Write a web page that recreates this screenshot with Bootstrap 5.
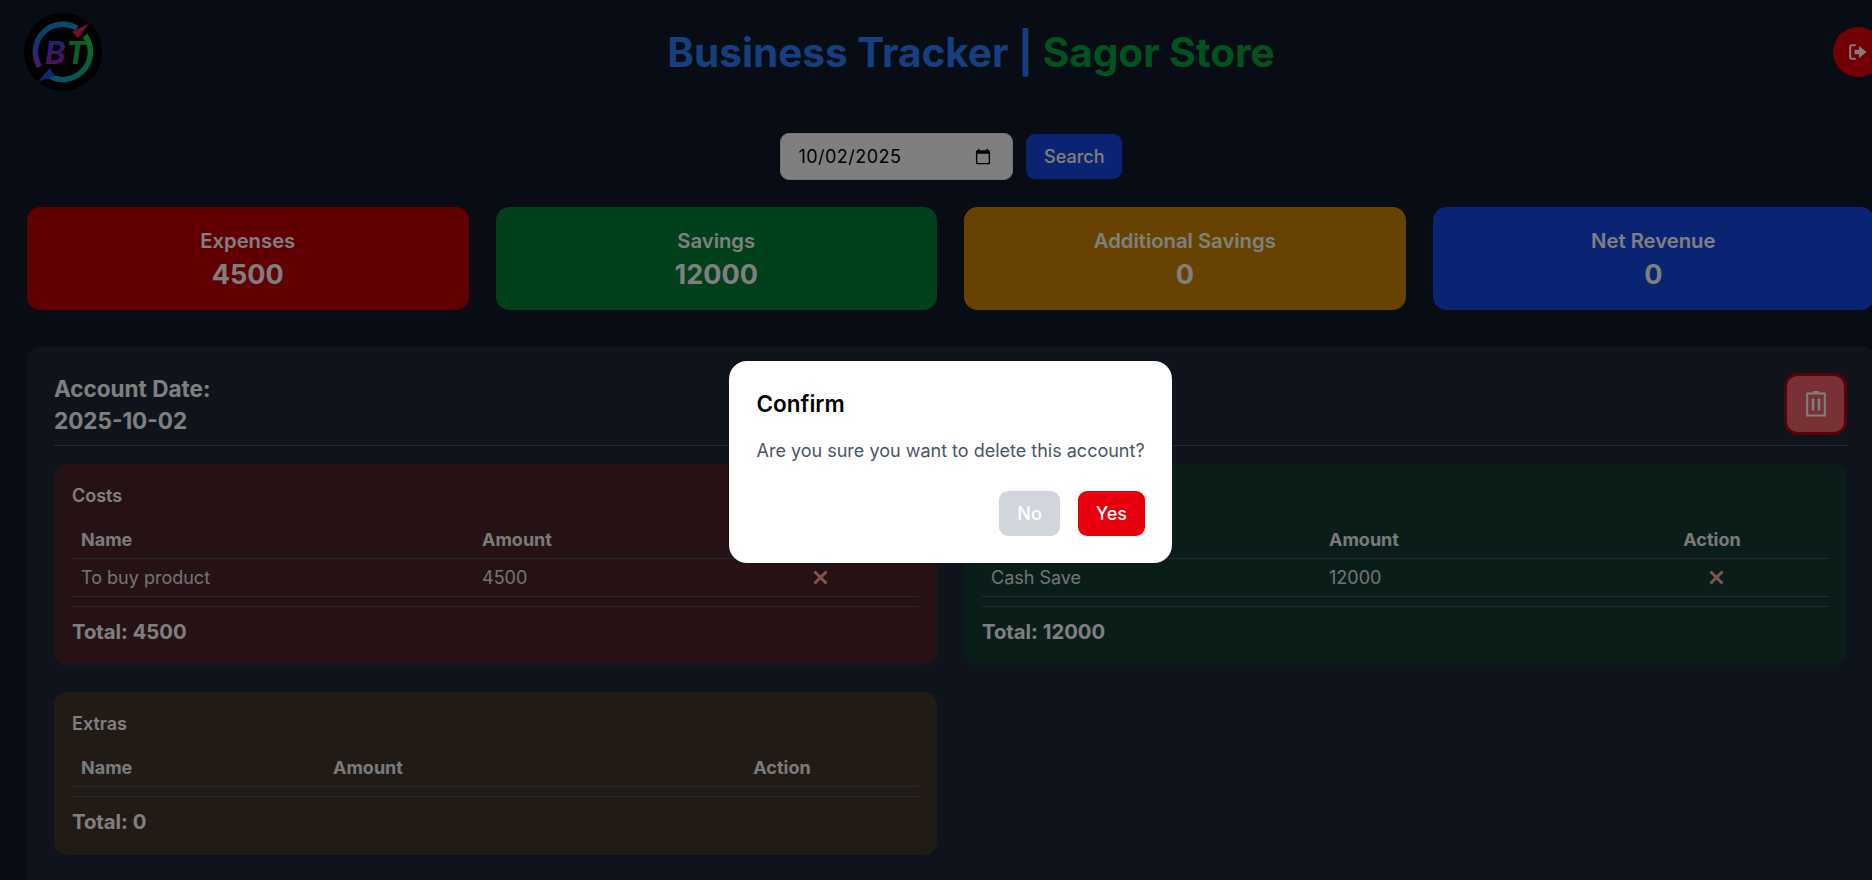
<!DOCTYPE html>
<html lang="en">
<head>
  <meta charset="UTF-8" />
  <meta name="viewport" content="width=device-width, initial-scale=1.0"/>
  <title>Business Tracker | Sagor Store</title>
  <link href="https://cdn.jsdelivr.net/npm/bootstrap@5.3.0/dist/css/bootstrap.min.css" rel="stylesheet"/>
  <style>
    html, body { height: 880px; overflow: hidden; }
    body { background: #101828; font-family: Inter, "Liberation Sans", sans-serif; color: #fff; font-size: 18px; }
    .page-wrap { width: 1901px; height: 880px; overflow: hidden; }

    .top-bar { padding: 13px 18px 0 24px; height: 103px; }
    .brand-logo { width: 78px; height: 78px; }
    .app-title { font-size: 40.5px; line-height: 45px; font-weight: 700; color: #2b7fff; margin: 0 0 12px 7px; }
    .app-title .store { color: #00a63e; }
    .logout-btn { width: 50px; height: 50px; background: #e7000b; border: 0; margin-bottom: 12px; }

    .search-row { gap: 13.5px; height: 47px; margin-top: 30px; padding-left: 1px; }
    .date-input { width: 233px; height: 47px; border-radius: 9px; border: 1px solid #e5e7eb; padding: 0 18px; font-size: 18px; letter-spacing: .45px; color: #000; background: #fff; }
    .search-btn { background: #1447e6; border: 0; color: #fff; font-size: 18px; line-height: 27px; padding: 9px 18px; border-radius: 9px; font-weight: 500; }

    .stat-grid { display: grid; grid-template-columns: repeat(4, 1fr); gap: 27px; padding: 27px 27px 0; }
    .stat-box { border-radius: 13.5px; padding: 18px; text-align: center; height: 103px; }
    .stat-label { font-size: 20.25px; line-height: 31.5px; font-weight: 600; }
    .stat-value { font-size: 27px; line-height: 36px; font-weight: 700; }
    .bg-exp { background: #c10007; }
    .bg-sav { background: #008236; }
    .bg-add { background: #d08700; }
    .bg-net { background: #1447e6; }

    .account-panel { background: #1e2939; border-radius: 13.5px; margin: 36px 27px 0; padding: 27px; height: 640px; }
    .account-head { border-bottom: 1px solid #4a5565; padding-bottom: 9px; margin-bottom: 18px; height: 73px; }
    .account-date { font-size: 22.5px; line-height: 31.5px; font-weight: 700; }
    .trash-btn { width: 63px; height: 62px; border: 3px solid #b00712; border-radius: 13.5px; background: #f0646a; padding: 0; }

    .ledger-grid { display: grid; grid-template-columns: 1fr 1fr; gap: 27px; align-items: start; }
    .ledger-box { border-radius: 13.5px; padding: 18px; }
    .tint-red { background: #4c2428; }
    .tint-green { background: #163a33; }
    .tint-amber { background: #44342a; }
    .ledger-title { font-size: 18px; line-height: 27px; font-weight: 600; margin-bottom: 11.5px; }
    .ledger-table { --bs-table-bg: transparent; --bs-table-color: #fff; --bs-border-color: #4a5565; color: #fff; table-layout: fixed; margin: 0; font-size: 18px; }
    .ledger-table th, .ledger-table td { padding: 5px 9px; line-height: 27px; border-bottom: 1px solid #4a5565; background: transparent; color: #f3f4f6; }
    .ledger-table td { font-weight: 400; color: #e5e7eb; }
    .ledger-table th { font-weight: 700; }
    .ledger-table th.action-shift { padding-right: 17px; }
    .w-a1 { width: 401px; } .w-a2 { width: 248px; } .w-a3 { width: 198px; }
    .w-b1 { width: 252px; } .w-b2 { width: 321px; } .w-b3 { width: 274px; }
    .w-c1 { width: 338px; } .w-c2 { width: 283px; } .w-c3 { width: 226px; }
    .x-mark { width: 15px; height: 15px; display: inline-block; vertical-align: -1px; }
    .ledger-rule { border-top: 1px solid #4a5565; margin: 9px 0; opacity: 1; }
    .ledger-total { font-size: 20.25px; line-height: 31.5px; font-weight: 700; }

    .dim-layer { position: fixed; top: 0; left: 0; width: 1901px; height: 924px; background: rgba(0, 0, 0, .5); z-index: 10; }
    .confirm-box { width: 443px; background: #fff; border-radius: 18px; padding: 27px 27px 27px 27.5px; color: #000; }
    .confirm-title { font-size: 22.5px; line-height: 31.5px; font-weight: 600; margin-bottom: 18px; }
    .confirm-text { font-size: 18px; line-height: 27px; color: #4a5565; margin-bottom: 27px; }
    .confirm-actions { gap: 18px; }
    .btn-no, .btn-yes { border: 0; color: #fff; font-size: 18px; line-height: 27px; padding: 9px 18px; border-radius: 9px; font-weight: 500; }
    .btn-no { background: #d1d5dc; }
    .btn-yes { background: #e7000b; }
  </style>
</head>
<body>
<div class="page-wrap">

  <!-- header -->
  <div class="top-bar d-flex justify-content-between align-items-center">
    <svg class="brand-logo align-self-start" viewBox="0 0 78 78" aria-label="logo">
      <defs>
        <linearGradient id="ringA" x1="0" y1="1" x2="1" y2="0">
          <stop offset="0" stop-color="#c020d0"/>
          <stop offset=".25" stop-color="#1c70e0"/>
          <stop offset="1" stop-color="#10a0d0"/>
        </linearGradient>
        <linearGradient id="ringB" x1="1" y1="0" x2="0" y2="1">
          <stop offset="0" stop-color="#18e038"/>
          <stop offset=".5" stop-color="#10b090"/>
          <stop offset="1" stop-color="#10a0d8"/>
        </linearGradient>
        <linearGradient id="letterB" x1="0" y1="0" x2="0" y2="1">
          <stop offset="0" stop-color="#2050f0"/>
          <stop offset="1" stop-color="#c018b0"/>
        </linearGradient>
      </defs>
      <circle cx="39" cy="39" r="39" fill="#000"/>
      <path d="M15.500 53.500A27.500 27.500 0 0 1 53 15.300" fill="none" stroke="url(#ringA)" stroke-width="5.500"/>
      <path d="M61 22.500A27.500 27.500 0 0 1 24 62" fill="none" stroke="url(#ringB)" stroke-width="5.500"/>
      <path d="M48 19L65 10.500 54 25Z" fill="#e0206a"/>
      <path d="M14 68.500L26 55 31 63Z" fill="#1c50e8"/>
      <text x="21" y="51" font-family="Inter, sans-serif" font-size="31" font-weight="700" font-style="italic" fill="url(#letterB)">B</text>
      <text x="42" y="51" font-family="Inter, sans-serif" font-size="31" font-weight="700" font-style="italic" fill="#10c040">T</text>
    </svg>
    <h1 class="app-title">Business Tracker | <span class="store">Sagor Store</span></h1>
    <button class="logout-btn rounded-circle d-flex align-items-center justify-content-center p-0">
      <svg width="18" height="16" viewBox="0 0 18 16">
        <path d="M6 1.200H3A1.800 1.800 0 0 0 1.200 3v10A1.800 1.800 0 0 0 3 14.800H6" fill="none" stroke="#fff" stroke-width="2" stroke-linecap="round"/>
        <path d="M5.500 5.800H10V2L17.500 8 10 14V10.200H5.500Z" fill="#fff"/>
      </svg>
    </button>
  </div>

  <!-- date search -->
  <div class="search-row d-flex justify-content-center align-items-center">
    <input type="date" class="date-input" value="2025-10-02" />
    <button class="search-btn">Search</button>
  </div>

  <!-- totals -->
  <div class="stat-grid">
    <div class="stat-box bg-exp"><div class="stat-label">Expenses</div><div class="stat-value">4500</div></div>
    <div class="stat-box bg-sav"><div class="stat-label">Savings</div><div class="stat-value">12000</div></div>
    <div class="stat-box bg-add"><div class="stat-label">Additional Savings</div><div class="stat-value">0</div></div>
    <div class="stat-box bg-net"><div class="stat-label">Net Revenue</div><div class="stat-value">0</div></div>
  </div>

  <!-- account -->
  <div class="account-panel">
    <div class="account-head d-flex justify-content-between align-items-start">
      <div class="account-date">Account Date:<br>2025-10-02</div>
      <button class="trash-btn d-flex align-items-center justify-content-center">
        <svg width="20" height="26" viewBox="0 0 20 26">
          <path d="M7 1h6" stroke="#fff" stroke-width="2" fill="none"/>
          <rect x="1.200" y="2.500" width="17.600" height="22" fill="none" stroke="#fff" stroke-width="2"/>
          <path d="M7 7.500v12M13 7.500v12" stroke="#fff" stroke-width="2.500" fill="none"/>
        </svg>
      </button>
    </div>

    <div class="ledger-grid">
      <div class="ledger-box tint-red">
        <div class="ledger-title">Costs</div>
        <table class="table ledger-table">
          <colgroup><col class="w-a1"><col class="w-a2"><col class="w-a3"></colgroup>
          <thead><tr><th>Name</th><th>Amount</th><th class="text-center">Action</th></tr></thead>
          <tbody><tr><td>To buy product</td><td>4500</td><td class="text-center">
            <svg class="x-mark" viewBox="0 0 15 15"><path d="M1.500 1.500l12 12M13.500 1.500l-12 12" stroke="#ffa8a0" stroke-width="3"/></svg>
          </td></tr></tbody>
        </table>
        <div class="ledger-rule"></div>
        <div class="ledger-total">Total: 4500</div>
      </div>

      <div class="ledger-box tint-green">
        <div class="ledger-title">Savings</div>
        <table class="table ledger-table">
          <colgroup><col class="w-c1"><col class="w-c2"><col class="w-c3"></colgroup>
          <thead><tr><th>Name</th><th>Amount</th><th class="text-center action-shift">Action</th></tr></thead>
          <tbody><tr><td>Cash Save</td><td>12000</td><td class="text-center">
            <svg class="x-mark" viewBox="0 0 15 15"><path d="M1.500 1.500l12 12M13.500 1.500l-12 12" stroke="#ffa8a0" stroke-width="3"/></svg>
          </td></tr></tbody>
        </table>
        <div class="ledger-rule"></div>
        <div class="ledger-total">Total: 12000</div>
      </div>

      <div class="ledger-box tint-amber">
        <div class="ledger-title">Extras</div>
        <table class="table ledger-table">
          <colgroup><col class="w-b1"><col class="w-b2"><col class="w-b3"></colgroup>
          <thead><tr><th>Name</th><th>Amount</th><th class="text-center">Action</th></tr></thead>
          <tbody></tbody>
        </table>
        <div class="ledger-rule"></div>
        <div class="ledger-total">Total: 0</div>
      </div>
    </div>
  </div>
</div>

<!-- delete confirm -->
<div class="dim-layer d-flex align-items-center justify-content-center">
  <div class="confirm-box">
    <div class="confirm-title">Confirm</div>
    <div class="confirm-text">Are you sure you want to delete this account?</div>
    <div class="confirm-actions d-flex justify-content-end">
      <button class="btn-no">No</button>
      <button class="btn-yes">Yes</button>
    </div>
  </div>
</div>

<script src="https://cdn.jsdelivr.net/npm/bootstrap@5.3.0/dist/js/bootstrap.bundle.min.js"></script>
</body>
</html>
